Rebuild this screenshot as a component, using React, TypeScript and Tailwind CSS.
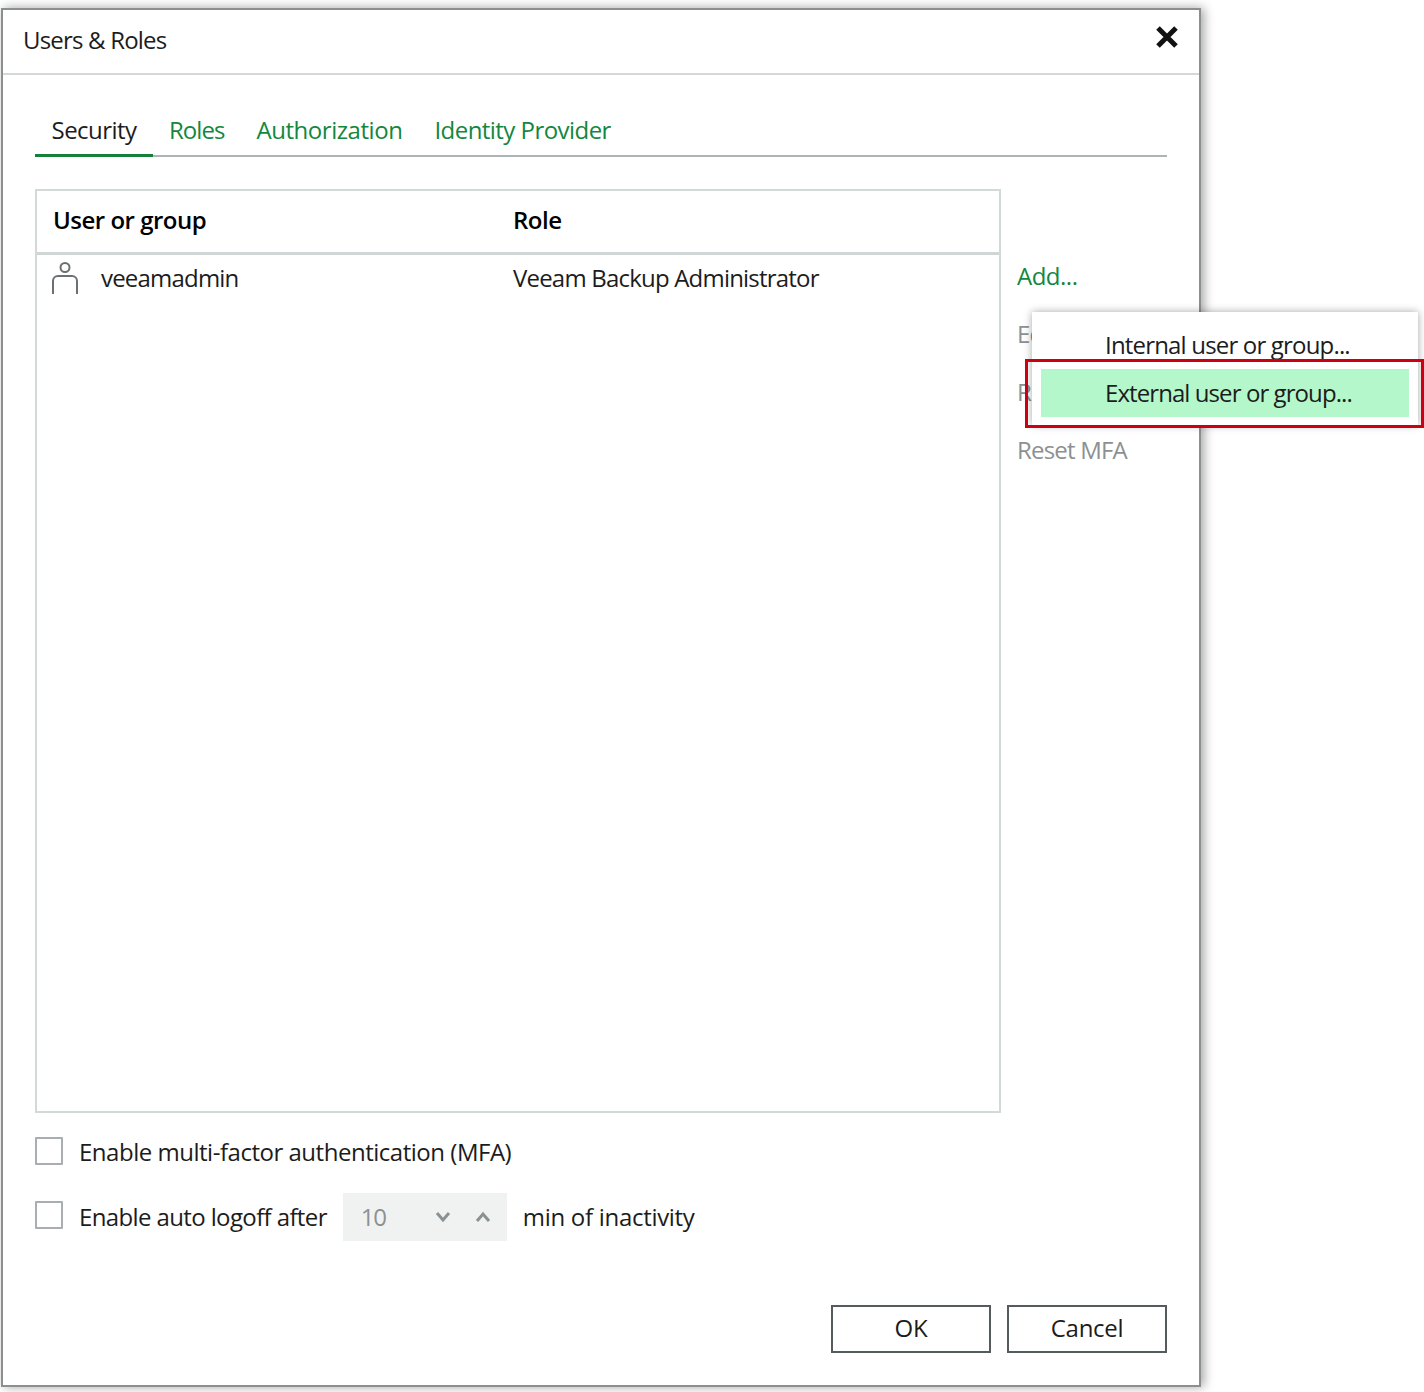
import React from 'react';

const font = "font-['Open_Sans','Noto_Sans',sans-serif]";

const tabs = [
  { label: 'Roles', track: 'tracking-[-0.95px]' },
  { label: 'Authorization', track: 'tracking-[-0.45px]' },
  { label: 'Identity Provider', track: 'tracking-[-0.55px]' },
];

const Checkbox = () => (
  <span className="block w-7 h-7 border-2 border-[#a9afb0] bg-white rounded-[1px] shrink-0" />
);

const PersonIcon = () => (
  <svg width="28" height="34" viewBox="0 0 28 34" fill="none" stroke="#6b7073" strokeWidth="2" className="shrink-0">
    <circle cx="14" cy="6.5" r="4.5" />
    <path d="M2 33V20a5 5 0 0 1 5-5h14a5 5 0 0 1 5 5v13" />
  </svg>
);

const Chevron = ({ up }: { up?: boolean }) => (
  <svg width="16" height="12" viewBox="0 0 16 12" fill="none" stroke="#8b9192" strokeWidth="3">
    <path d={up ? 'M2 10l6-7 6 7' : 'M2 2l6 7 6-7'} />
  </svg>
);

const SideAction = ({ label, green }: { label: string; green?: boolean }) => (
  <span className={`h-[58px] flex items-center ${green ? 'text-[#13873e] tracking-[-0.5px]' : 'text-[#8b9192]'}`}>{label}</span>
);

const FooterButton = ({ label }: { label: string }) => (
  <button className="w-40 h-12 pb-0.5 border-2 border-[#555a5c] text-[#1c1c1c] bg-white tracking-[-0.3px]">{label}</button>
);

const App = () => {
  return (
    <div className={`${font} relative w-[1424px] h-[1392px] pt-2 bg-white text-[24px] tracking-[-0.8px] text-[#1c1c1c] overflow-hidden`}>
      <div className="ml-px w-[1200px] h-[1379px] bg-white border-2 border-[#8c8f90] shadow-[3px_0_10px_rgba(0,0,0,0.36)] flex flex-col">
        <header className="h-[65px] shrink-0 border-b-2 border-[#d5d8d8] flex items-center justify-between pl-[20px] pr-[20px]">
          <span className="mb-1">Users &amp; Roles</span>
          <svg width="24" height="24" viewBox="0 0 24 24" fill="none" stroke="#111" strokeWidth="5" className="mb-[10px]">
            <path d="M3 3l18 18M21 3L3 21" />
          </svg>
        </header>

        <div className="flex-1 px-8 flex flex-col">
          <nav className="mt-7 h-[54px] flex border-b-2 border-[#aeb3b4] tracking-[-0.55px]">
            <span className="w-[118px] h-[54px] pt-0.5 flex items-center justify-center border-b-[3px] border-[#13813a]">Security</span>
            {tabs.map((tab) => (
              <span key={tab.label} className={`h-[52px] pt-0.5 px-4 flex items-center text-[#13873e] ${tab.track}`}>{tab.label}</span>
            ))}
          </nav>

          <div className="mt-8 flex gap-4">
            <section className="w-[966px] h-[924px] border-2 border-[#d3d8d8] shrink-0">
              <div className="h-[64px] pb-1 flex items-center border-b-[3px] border-[#d0d5d5] font-semibold text-black tracking-[-0.5px]">
                <span className="w-[476px] pl-4">User or group</span>
                <span>Role</span>
              </div>
              <div className="h-[46px] flex items-center">
                <div className="w-[476px] pl-[14px] flex items-center gap-[22px]">
                  <PersonIcon />
                  <span>veeamadmin</span>
                </div>
                <span>Veeam Backup Administrator</span>
              </div>
            </section>
            <aside className="flex flex-col pt-[58px]">
              <SideAction label="Add..." green />
              <SideAction label="Edit..." />
              <SideAction label="Remove" />
              <SideAction label="Reset MFA" />
            </aside>
          </div>

          <label className="mt-5 h-9 flex items-center gap-4 tracking-[-0.48px]">
            <Checkbox />
            <span className="h-9 flex items-center pt-0.5">Enable multi-factor authentication (MFA)</span>
          </label>

          <div className="mt-6 h-12 flex items-center gap-4 tracking-[-0.62px]">
            <span className="mb-1"><Checkbox /></span>
            <span>Enable auto logoff after</span>
            <div className="w-[164px] h-12 bg-[#f0f2f2] flex items-center pl-[18px] pr-4 text-[#8b9192]">
              <span className="flex-1 tracking-[-1.4px]">10</span>
              <span className="flex items-center gap-6">
                <Chevron />
                <Chevron up />
              </span>
            </div>
            <span className="tracking-[-0.3px]">min of inactivity</span>
          </div>

          <footer className="mt-16 flex justify-end gap-4">
            <FooterButton label="OK" />
            <FooterButton label="Cancel" />
          </footer>
        </div>
      </div>

      <div className="absolute left-[1032px] top-[312px] w-[386px] h-[113px] bg-white shadow-[0_0_8px_rgba(0,0,0,0.35)] pt-[9px] px-[9px] tracking-[-0.82px]">
        <div className="h-12 flex items-center pl-[64px]">Internal user or group...</div>
        <div className="h-12 flex items-center pl-[64px] bg-[#b4f7cb] tracking-[-0.92px]">External user or group...</div>
      </div>

      <div className="absolute left-[1025px] top-[359px] w-[399px] h-[69px] border-[3px] border-[#cc0011]" />
    </div>
  );
};

export default App;
